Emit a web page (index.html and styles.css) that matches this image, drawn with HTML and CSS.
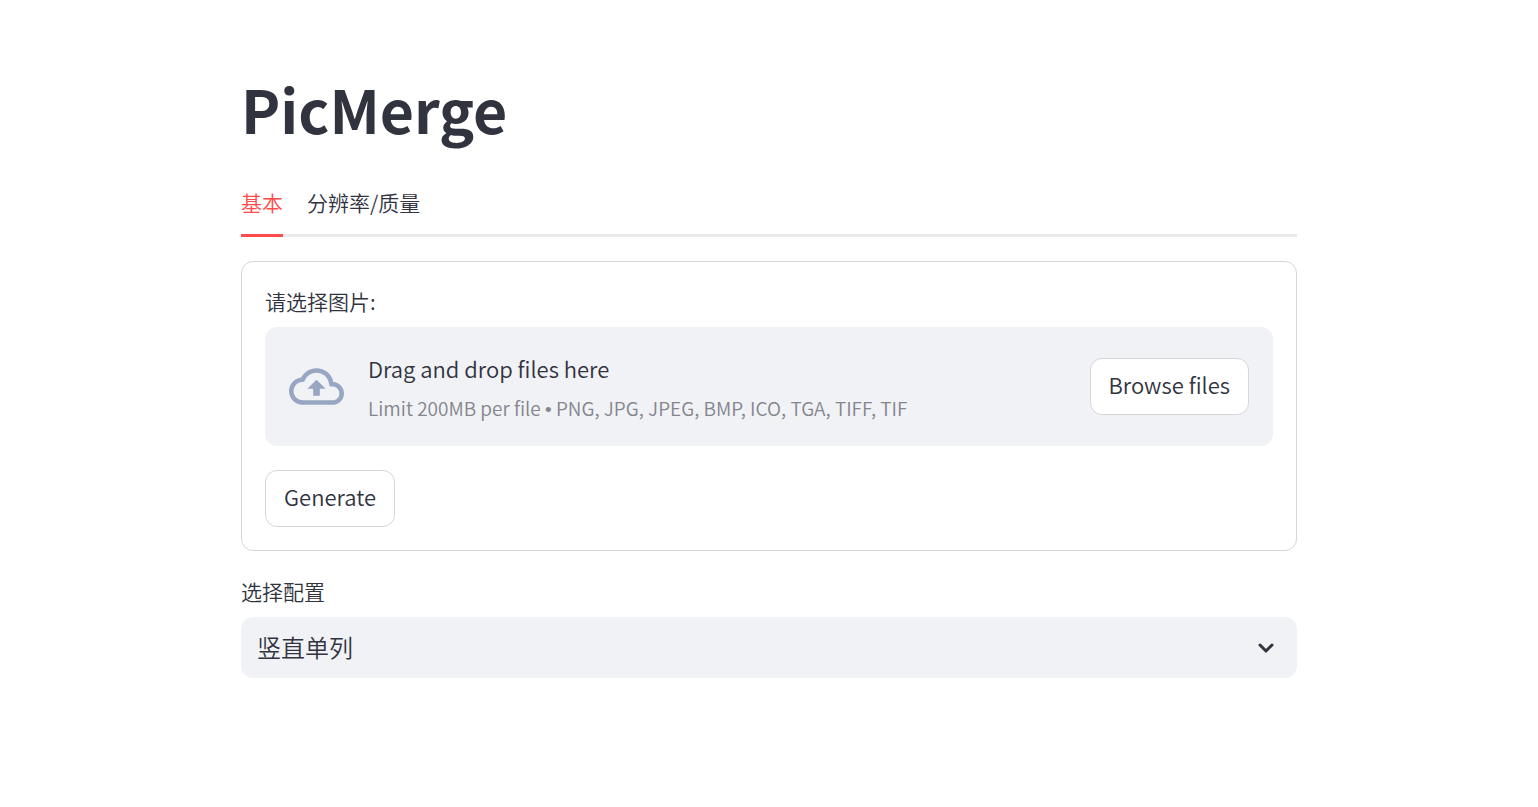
FILE: index.html
```html
<!DOCTYPE html>
<html lang="zh-CN">
<head>
<meta charset="utf-8">
<meta name="viewport" content="width=device-width, initial-scale=1">
<title>PicMerge</title>
<link rel="stylesheet" href="styles.css">
</head>
<body>
<main class="page">
  <h1 class="title">PicMerge</h1>
  <div class="tabs" role="tablist">
    <button class="tab tab-active" type="button" role="tab" aria-selected="true">基本</button>
    <button class="tab" type="button" role="tab" aria-selected="false">分辨率/质量</button>
  </div>
  <form class="card">
    <div class="field">
      <label class="label" for="browse">请选择图片:</label>
      <section class="dropzone">
        <svg class="cloud" viewBox="0 0 24 24" aria-hidden="true"><path d="M19.35 10.04A7.49 7.49 0 0012 4C9.11 4 6.6 5.64 5.35 8.04A5.994 5.994 0 000 14c0 3.31 2.69 6 6 6h13c2.76 0 5-2.24 5-5 0-2.64-2.05-4.78-4.65-4.96zM19 18H6c-2.21 0-4-1.79-4-4 0-2.05 1.53-3.76 3.56-3.97l1.07-.11.5-.95A5.469 5.469 0 0112 6c2.62 0 4.88 1.86 5.39 4.43l.3 1.5 1.53.11A2.98 2.98 0 0122 15c0 1.65-1.35 3-3 3zM8 13h2.55v3h2.9v-3H16l-4-4z"/></svg>
        <div class="instructions">
          <span class="drop-text">Drag and drop files here</span>
          <small class="limit">Limit 200MB per file <span class="bullet">•</span> PNG, JPG, JPEG, BMP, ICO, TGA, TIFF, TIF</small>
        </div>
        <button class="button" id="browse" type="button">Browse files</button>
      </section>
    </div>
    <button class="button" type="button">Generate</button>
  </form>
  <div class="field">
    <label class="label" for="config">选择配置</label>
    <div class="select-box">
      <select class="select" id="config"><option>竖直单列</option></select>
      <svg class="chevron" viewBox="0 0 16 10" aria-hidden="true"><path d="M2 2l6 6 6-6"/></svg>
    </div>
  </div>
</main>
</body>
</html>
```

FILE: styles.css
```css
* {
  box-sizing: border-box;
}

body {
  margin: 0;
  background: #fff;
  color: #31333f;
  font-family: "Noto Sans CJK SC", "Noto Sans", sans-serif;
  font-size: 22px;
  font-weight: 350;
  line-height: 36px;
}

button,
select {
  font: inherit;
  color: inherit;
  cursor: pointer;
}

.page {
  max-width: 1104px;
  margin: 0 auto;
  padding: 72px 24px;
}

.title {
  margin: 0;
  font-size: 59px;
  font-weight: 700;
  line-height: 74px;
}

.tabs {
  display: flex;
  gap: 24px;
  margin: 26px 0 24px;
  box-shadow: inset 0 -3px #e9e9eb;
}

.tab {
  padding: 12px 0 14px;
  border: 0;
  border-bottom: 3px solid transparent;
  background: none;
  font-size: 21px;
}

.tab-active {
  border-color: #ff4b4b;
  color: #ff4b4b;
}

.card {
  display: flex;
  flex-direction: column;
  align-items: flex-start;
  gap: 24px;
  margin-bottom: 24px;
  padding: 23px;
  border: 1px solid #d6d6d9;
  border-radius: 12px;
}

.field {
  display: flex;
  flex-direction: column;
  gap: 10px;
  width: 100%;
}

.label {
  font-size: 21px;
  line-height: 32px;
}

.dropzone {
  display: flex;
  align-items: center;
  padding: 20px 24px;
  border-radius: 12px;
  background: #f0f2f6;
}

.cloud {
  flex: none;
  width: 55px;
  height: 55px;
  margin-right: 24px;
  fill: #98a6c3;
}

.instructions {
  display: flex;
  flex: 1;
  flex-direction: column;
  gap: 4px;
  padding-top: 3px;
}

.limit {
  color: #84858d;
  font-size: 19px;
}

.bullet {
  font-family: "Liberation Sans", sans-serif;
  line-height: 1;
}

.button {
  flex: none;
  padding: 7px 18px 12px;
  border: 1px solid #d6d6d9;
  border-radius: 12px;
  background: #fff;
}

.select-box {
  display: grid;
  align-items: center;
}

.select,
.chevron {
  grid-row: 1;
  grid-column: 1;
}

.select {
  appearance: none;
  width: 100%;
  padding: 12px 16px 13px;
  border: 0;
  border-radius: 12px;
  background: #f0f2f6;
  font-size: 24px;
}

.chevron {
  justify-self: end;
  width: 16px;
  margin-right: 23px;
  fill: none;
  stroke: #31333f;
  stroke-width: 3;
  stroke-linecap: round;
  stroke-linejoin: round;
  pointer-events: none;
}
```
